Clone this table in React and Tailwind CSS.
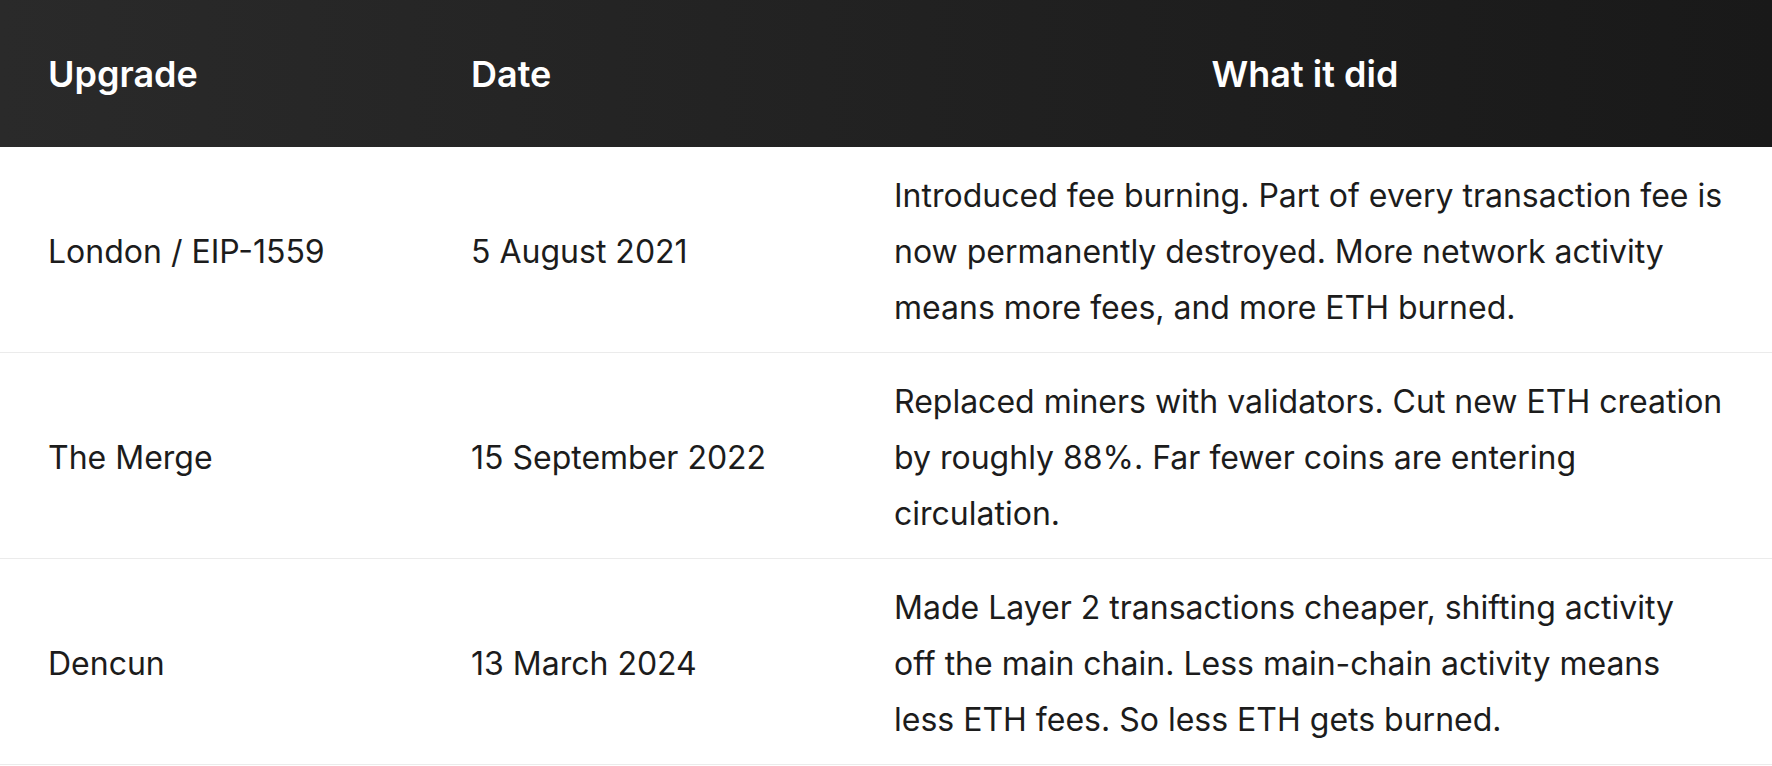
import React from "react";

const rows = [
  {
    upgrade: "London / EIP-1559",
    date: "5 August 2021",
    what: "Introduced fee burning. Part of every transaction fee is now permanently destroyed. More network activity means more fees, and more ETH burned.",
  },
  {
    upgrade: "The Merge",
    date: "15 September 2022",
    what: "Replaced miners with validators. Cut new ETH creation by roughly 88%. Far fewer coins are entering circulation.",
  },
  {
    upgrade: "Dencun",
    date: "13 March 2024",
    what: "Made Layer 2 transactions cheaper, shifting activity off the main chain. Less main-chain activity means less ETH fees. So less ETH gets burned.",
  },
];

const App = () => {
  return (
    <div className="w-[1772px] bg-white font-['Inter',_'Liberation_Sans',_sans-serif]">
      <table className="w-full table-fixed border-collapse">
        <colgroup>
          <col className="w-[423px]" />
          <col className="w-[423px]" />
          <col />
        </colgroup>
        <thead>
          <tr className="h-[147px] bg-gradient-to-r from-[#2a2a2a] to-[#191919] text-white">
            <th className="px-12 text-left text-[36px] font-semibold">Upgrade</th>
            <th className="px-12 text-left text-[36px] font-semibold">Date</th>
            <th className="pl-12 pr-14 text-center text-[36px] font-semibold">What it did</th>
          </tr>
        </thead>
        <tbody className="text-[32px] leading-[56px] text-[#1c1c1c]">
          {rows.map((r) => (
            <tr key={r.upgrade} className="border-b border-[#ebebeb]">
              <td className="px-12 pt-[21px] pb-[16px] align-middle">{r.upgrade}</td>
              <td className="px-12 pt-[21px] pb-[16px] align-middle">{r.date}</td>
              <td className="px-12 pt-[21px] pb-[16px] align-middle">{r.what}</td>
            </tr>
          ))}
        </tbody>
      </table>
    </div>
  );
};

export default App;
